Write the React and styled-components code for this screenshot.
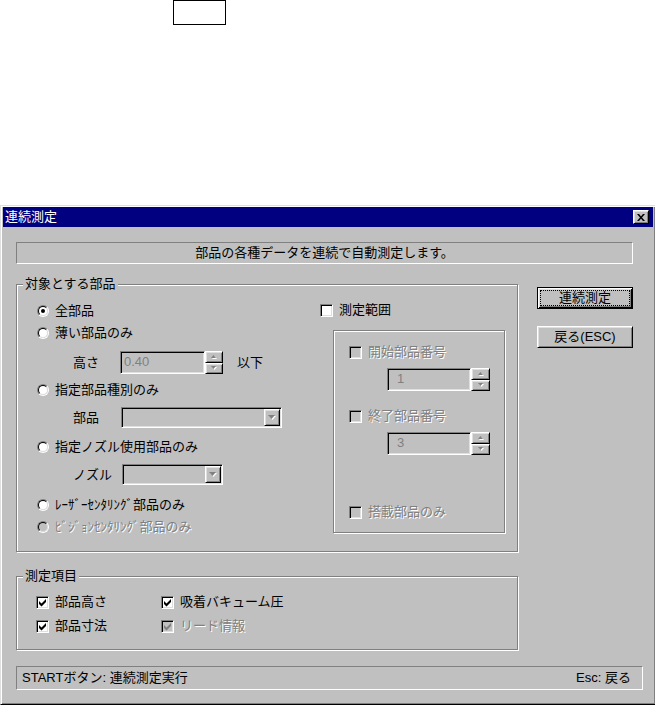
import React from "react";
import styled, { createGlobalStyle, css } from "styled-components";

const GlobalStyle = createGlobalStyle`
  html, body { margin: 0; padding: 0; background: #fff; overflow: hidden; }
  body {
    font-family: "Liberation Sans", "Noto Sans CJK JP", sans-serif;
    font-size: 13px;
    color: #000;
  }
`;

const raised = css`
  border: 1px solid;
  border-color: #fff #000 #000 #fff;
  box-shadow: inset 1px 1px 0 #dfdfdf, inset -1px -1px 0 #808080;
`;

const sunken = css`
  border: 1px solid;
  border-color: #808080 #fff #fff #808080;
  box-shadow: inset 1px 1px 0 #000, inset -1px -1px 0 #dfdfdf;
`;

const Page = styled.div`
  width: 655px;
  height: 707px;
  overflow: hidden;
  background: #fff;
`;

const TopBox = styled.div`
  box-sizing: border-box;
  width: 53px;
  height: 25px;
  margin-left: 173px;
  border: 1px solid #000;
  background: #fff;
`;

const Window = styled.div`
  box-sizing: border-box;
  width: 656px;
  margin-top: 180px;
  background: #c0c0c0;
  border: 1px solid;
  border-color: #dfdfdf #000 #000 #dfdfdf;
  box-shadow: inset 1px 1px 0 #fff, inset -1px -1px 0 #808080;
  padding: 1px 2px 2px 2px;
`;

const TitleBar = styled.div`
  height: 20px;
  background: #000080;
  color: #fff;
  display: flex;
  align-items: center;
  justify-content: space-between;
  padding: 0 4px 0 2px;
`;

const Title = styled.span`
  line-height: 16px;
`;

const CloseButton = styled.span`
  box-sizing: border-box;
  width: 16px;
  height: 14px;
  background: #c0c0c0;
  ${raised};
  display: flex;
  align-items: center;
  justify-content: center;
  padding-right: 1px;
`;

const Body = styled.div`
  padding: 15px 0 12px 13px;
`;

const InfoBox = styled.div`
  box-sizing: border-box;
  width: 617px;
  height: 22px;
  border: 1px solid;
  border-color: #808080 #fff #fff #808080;
  display: flex;
  align-items: center;
  justify-content: center;
  line-height: 16px;
`;

const MainRow = styled.div`
  display: flex;
  align-items: flex-start;
  gap: 19px;
  margin-top: 20px;
`;

const GroupBox = styled.div`
  position: relative;
  box-sizing: border-box;
  width: ${(p) => p.$w || 502}px;
  height: ${(p) => p.$h}px;
  margin-top: ${(p) => p.$mt || 0}px;
  margin-left: ${(p) => p.$ml || 0}px;
  border: 1px solid #808080;
  box-shadow: inset 1px 1px 0 #fff, 1px 1px 0 #fff;
  padding: ${(p) => p.$pad};
`;

const GroupLabel = styled.span`
  position: absolute;
  top: -9px;
  left: 6px;
  padding: 0 2px;
  background: #c0c0c0;
  line-height: 16px;
`;

const GroupInner = styled.div`
  display: flex;
`;

const LeftCol = styled.div`
  flex: 1;
  display: flex;
  flex-direction: column;
`;

const RightCol = styled.div`
  width: 185px;
  display: flex;
  flex-direction: column;
`;

const OptionRow = styled.div`
  display: flex;
  align-items: center;
  gap: 6px;
  height: 22px;
  margin-top: ${(p) => p.$mt || 0}px;
  white-space: nowrap;
`;

const SubRow = styled.div`
  display: flex;
  align-items: center;
  height: ${(p) => p.$h}px;
  margin-top: ${(p) => p.$mt || 0}px;
  padding-left: ${(p) => p.$pl || 0}px;
`;

const SubLabel = styled.span`
  width: ${(p) => p.$w}px;
  line-height: 16px;
  flex: none;
`;

const Text = styled.span`
  line-height: 16px;
  color: ${(p) => (p.$disabled ? "#808080" : "#000")};
  text-shadow: ${(p) => (p.$disabled ? "1px 1px 0 #fff" : "none")};
  margin-left: ${(p) => p.$ml || 0}px;
`;

const RadioOuter = styled.span`
  box-sizing: border-box;
  width: 12px;
  height: 12px;
  flex: none;
  border-radius: 50%;
  border: 1px solid;
  border-color: #808080 #fff #fff #808080;
  display: flex;
`;

const RadioInner = styled.span`
  box-sizing: border-box;
  flex: 1;
  border-radius: 50%;
  border: 1px solid;
  border-color: #000 #dfdfdf #dfdfdf #000;
  background: ${(p) => (p.$disabled ? "#c0c0c0" : "#fff")};
  display: flex;
  align-items: center;
  justify-content: center;
`;

const RadioDot = styled.span`
  width: 4px;
  height: 4px;
  border-radius: 50%;
  background: #000;
`;

const CheckBoxBox = styled.span`
  box-sizing: border-box;
  width: 13px;
  height: 13px;
  flex: none;
  ${sunken};
  background: ${(p) => (p.$disabled ? "#c0c0c0" : "#fff")};
  display: flex;
  align-items: center;
  justify-content: center;
`;

const Field = styled.div`
  box-sizing: border-box;
  width: ${(p) => p.$w}px;
  height: 23px;
  ${sunken};
  background: #c0c0c0;
  color: #808080;
  padding: 0 0 2px ${(p) => p.$pad}px;
  display: flex;
  align-items: center;
  font-family: "Liberation Sans", sans-serif;
  font-size: 13px;
`;

const Spinner = styled.div`
  width: ${(p) => p.$w}px;
  height: 23px;
  display: flex;
  flex-direction: column;
`;

const SpinButton = styled.span`
  box-sizing: border-box;
  flex: 1;
  background: #c0c0c0;
  ${raised};
  display: flex;
  align-items: center;
  justify-content: center;
`;

const Combo = styled.div`
  box-sizing: border-box;
  width: ${(p) => p.$w}px;
  height: 21px;
  ${sunken};
  background: #c0c0c0;
  padding: 1px;
  display: flex;
  justify-content: flex-end;
`;

const DropButton = styled.span`
  box-sizing: border-box;
  width: 16px;
  height: 100%;
  background: #c0c0c0;
  ${raised};
  display: flex;
  align-items: center;
  justify-content: center;
`;

const InnerFrame = styled.div`
  box-sizing: border-box;
  width: 172px;
  height: 203px;
  margin: 9px 0 0 13px;
  border: 1px solid #808080;
  box-shadow: inset 1px 1px 0 #fff, 1px 1px 0 #fff;
  padding: 10px 0 0 15px;
  display: flex;
  flex-direction: column;
`;

const ButtonColumn = styled.div`
  display: flex;
  flex-direction: column;
  gap: 17px;
  margin-top: 3px;
`;

const PushButton = styled.div`
  box-sizing: border-box;
  width: 96px;
  height: 22px;
  background: #c0c0c0;
  display: flex;
  align-items: stretch;
  justify-content: center;
  line-height: 16px;
  ${(p) =>
    p.$default
      ? css`
          border: 1px solid #000;
          box-shadow: inset 1px 1px 0 #fff, inset -1px -1px 0 #000,
            inset 2px 2px 0 #dfdfdf, inset -2px -2px 0 #808080;
          padding: 2px;
        `
      : css`
          ${raised};
          padding: 2px;
        `}
`;

const FocusRing = styled.span`
  box-sizing: border-box;
  flex: 1;
  border: 1px ${(p) => (p.$show ? "dotted #000" : "solid transparent")};
  display: flex;
  align-items: center;
  justify-content: center;
`;

const CheckGrid = styled.div`
  display: grid;
  grid-template-columns: 125px auto;
  grid-auto-rows: 22px;
  row-gap: 2px;
`;

const StatusBar = styled.div`
  box-sizing: border-box;
  width: 627px;
  height: 24px;
  margin-top: 16px;
  border: 1px solid;
  border-color: #808080 #fff #fff #808080;
  display: flex;
  align-items: center;
  justify-content: space-between;
  padding: 0 11px 0 5px;
  line-height: 16px;
`;

const CheckMark = ({ color }) => (
  <svg width="9" height="9" viewBox="0 0 9 9">
    <polygon points="1,3 3.5,5.5 8,1 8,4 3.5,8.5 1,6" fill={color} />
  </svg>
);

const CloseGlyph = () => (
  <svg width="8" height="7" viewBox="0 0 8 7">
    <polygon points="0,0 2,0 8,7 6,7" fill="#000" />
    <polygon points="6,0 8,0 2,7 0,7" fill="#000" />
  </svg>
);

const DownArrow = ({ w = 7, h = 4 }) => (
  <svg width={w + 1} height={h + 1} viewBox={`0 0 ${w + 1} ${h + 1}`}>
    <polygon points={`1,1 ${w + 1},1 ${(w + 2) / 2},${h + 1}`} fill="#fff" />
    <polygon points={`0,0 ${w},0 ${w / 2},${h}`} fill="#808080" />
  </svg>
);

const UpArrow = ({ w = 5, h = 3 }) => (
  <svg width={w + 1} height={h + 1} viewBox={`0 0 ${w + 1} ${h + 1}`}>
    <polygon points={`1,${h + 1} ${w + 1},${h + 1} ${(w + 2) / 2},1`} fill="#fff" />
    <polygon points={`0,${h} ${w},${h} ${w / 2},0`} fill="#808080" />
  </svg>
);

const Radio = ({ checked, disabled, label, mt }) => (
  <OptionRow $mt={mt}>
    <RadioOuter>
      <RadioInner $disabled={disabled}>{checked && <RadioDot />}</RadioInner>
    </RadioOuter>
    <Text $disabled={disabled}>{label}</Text>
  </OptionRow>
);

const Check = ({ checked, disabled, label, mt }) => (
  <OptionRow $mt={mt}>
    <CheckBoxBox $disabled={disabled}>
      {checked && <CheckMark color={disabled ? "#808080" : "#000"} />}
    </CheckBoxBox>
    <Text $disabled={disabled}>{label}</Text>
  </OptionRow>
);

const SpinBox = ({ value, w, sw, pad }) => (
  <>
    <Field $w={w} $pad={pad}>
      {value}
    </Field>
    <Spinner $w={sw}>
      <SpinButton>
        <UpArrow />
      </SpinButton>
      <SpinButton>
        <DownArrow w={5} h={3} />
      </SpinButton>
    </Spinner>
  </>
);

const ComboBox = ({ w }) => (
  <Combo $w={w}>
    <DropButton>
      <DownArrow />
    </DropButton>
  </Combo>
);

export default function App() {
  return (
    <Page>
      <GlobalStyle />
      <TopBox />
      <Window>
        <TitleBar>
          <Title>連続測定</Title>
          <CloseButton>
            <CloseGlyph />
          </CloseButton>
        </TitleBar>
        <Body>
          <InfoBox>部品の各種データを連続で自動測定します。</InfoBox>
          <MainRow>
            <GroupBox $h={268} $pad="15px 12px 0 20px">
              <GroupLabel>対象とする部品</GroupLabel>
              <GroupInner>
                <LeftCol>
                  <Radio checked label="全部品" />
                  <Radio label="薄い部品のみ" />
                  <SubRow $h={23} $mt={7} $pl={36}>
                    <SubLabel $w={47}>高さ</SubLabel>
                    <SpinBox value="0.40" w={85} sw={18} pad={3} />
                    <Text $ml={14}>以下</Text>
                  </SubRow>
                  <Radio label="指定部品種別のみ" mt={5} />
                  <SubRow $h={21} $mt={6} $pl={36}>
                    <SubLabel $w={48}>部品</SubLabel>
                    <ComboBox w={161} />
                  </SubRow>
                  <Radio label="指定ノズル使用部品のみ" mt={8} />
                  <SubRow $h={21} $mt={6} $pl={36}>
                    <SubLabel $w={49}>ノズル</SubLabel>
                    <ComboBox w={101} />
                  </SubRow>
                  <Radio label="ﾚｰｻﾞｰｾﾝﾀﾘﾝｸﾞ部品のみ" mt={9} />
                  <Radio label="ﾋﾞｼﾞｮﾝｾﾝﾀﾘﾝｸﾞ部品のみ" disabled />
                </LeftCol>
                <RightCol>
                  <Check label="測定範囲" mt={-1} />
                  <InnerFrame>
                    <Check label="開始部品番号" disabled />
                    <SubRow $h={23} $mt={5} $pl={38}>
                      <SpinBox value="1" w={84} sw={19} pad={9} />
                    </SubRow>
                    <Check label="終了部品番号" disabled mt={14} />
                    <SubRow $h={23} $mt={5} $pl={38}>
                      <SpinBox value="3" w={84} sw={19} pad={9} />
                    </SubRow>
                    <Check label="搭載部品のみ" disabled mt={46} />
                  </InnerFrame>
                </RightCol>
              </GroupInner>
            </GroupBox>
            <ButtonColumn>
              <PushButton $default>
                <FocusRing $show>連続測定</FocusRing>
              </PushButton>
              <PushButton>
                <FocusRing>戻る(ESC)</FocusRing>
              </PushButton>
            </ButtonColumn>
          </MainRow>
          <GroupBox $h={74} $mt={24} $pad="14px 0 0 19px">
            <GroupLabel>測定項目</GroupLabel>
            <CheckGrid>
              <Check checked label="部品高さ" />
              <Check checked label="吸着バキューム圧" />
              <Check checked label="部品寸法" />
              <Check checked disabled label="リード情報" />
            </CheckGrid>
          </GroupBox>
          <StatusBar>
            <span>STARTボタン: 連続測定実行</span>
            <span>Esc: 戻る</span>
          </StatusBar>
        </Body>
      </Window>
    </Page>
  );
}
